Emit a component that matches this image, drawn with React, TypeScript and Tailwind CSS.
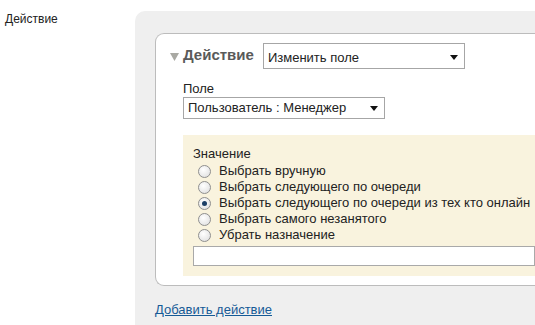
const options = [
  'Выбрать вручную',
  'Выбрать следующего по очереди',
  'Выбрать следующего по очереди из тех кто онлайн',
  'Выбрать самого незанятого',
  'Убрать назначение',
];

const Radio = ({ checked }: { checked?: boolean }) => (
  <span className="w-[13px] h-[13px] rounded-full border border-[#8f8f8f] bg-[radial-gradient(circle_at_40%_35%,#ffffff,#dcdcdc)] flex items-center justify-center shrink-0">
    {checked && <span className="w-[5px] h-[5px] rounded-full bg-[#1c3f66]" />}
  </span>
);

const Select = ({ value, className }: { value: string; className: string }) => (
  <div className={`border border-[#a6a6a6] bg-white flex items-center justify-between pl-[4px] pr-[6px] ${className}`}>
    <span>{value}</span>
    <svg width="8" height="5" viewBox="0 0 8 5">
      <path d="M0 0H8L4 5Z" fill="#111" />
    </svg>
  </div>
);

export default function App() {
  return (
    <div className="w-[535px] h-[325px] bg-white overflow-hidden flex text-[13px] text-[#222] font-['Liberation_Sans',Arial,sans-serif]">
      <div className="w-[135px] shrink-0 pl-[5px] pt-[12px] text-[12px] leading-[14px]">Действие</div>
      <div className="flex-1 mt-[11px] bg-[#efefef] rounded-tl-[10px] pl-[20px] pt-[22px] min-w-0">
        <div className="bg-white border border-[#bcbcbc] border-r-0 rounded-l-[9px] pl-[14px] pt-[9px] pb-[9px]">
          <div className="flex items-center h-[26px]">
            <svg width="9" height="8" viewBox="0 0 9 8" className="mr-[4px] mt-[2px]">
              <path d="M0 0H9L4.5 8Z" fill="#a9a9a3" />
            </svg>
            <span className="text-[15px] font-bold text-[#5a5a5a] mr-[9px] -mt-[2px]">Действие</span>
            <Select value="Изменить поле" className="w-[202px] h-[26px] pt-[3px]" />
          </div>
          <div className="pl-[13px]">
            <div className="mt-[13px] leading-[14px]">Поле</div>
            <Select value="Пользователь : Менеджер" className="w-[202px] h-[22px] mt-[1px]" />
            <div className="mt-[16px] bg-[#f9f3de] pl-[10px] pt-[11px] pb-[10px] h-[141px]">
              <div className="leading-[16px]">Значение</div>
              <div className="pl-[5px] mt-[1px]">
                {options.map((o, i) => (
                  <div key={o} className="flex items-center h-[16px] gap-[8px] whitespace-nowrap">
                    <Radio checked={i === 2} />
                    <span>{o}</span>
                  </div>
                ))}
              </div>
              <div className="h-[20px] border border-[#a9a9a9] bg-white mt-[3px]" />
            </div>
          </div>
        </div>
        <a href="#" className="block mt-[16px] text-[#155a96] underline leading-[15px]">Добавить действие</a>
      </div>
    </div>
  );
}
